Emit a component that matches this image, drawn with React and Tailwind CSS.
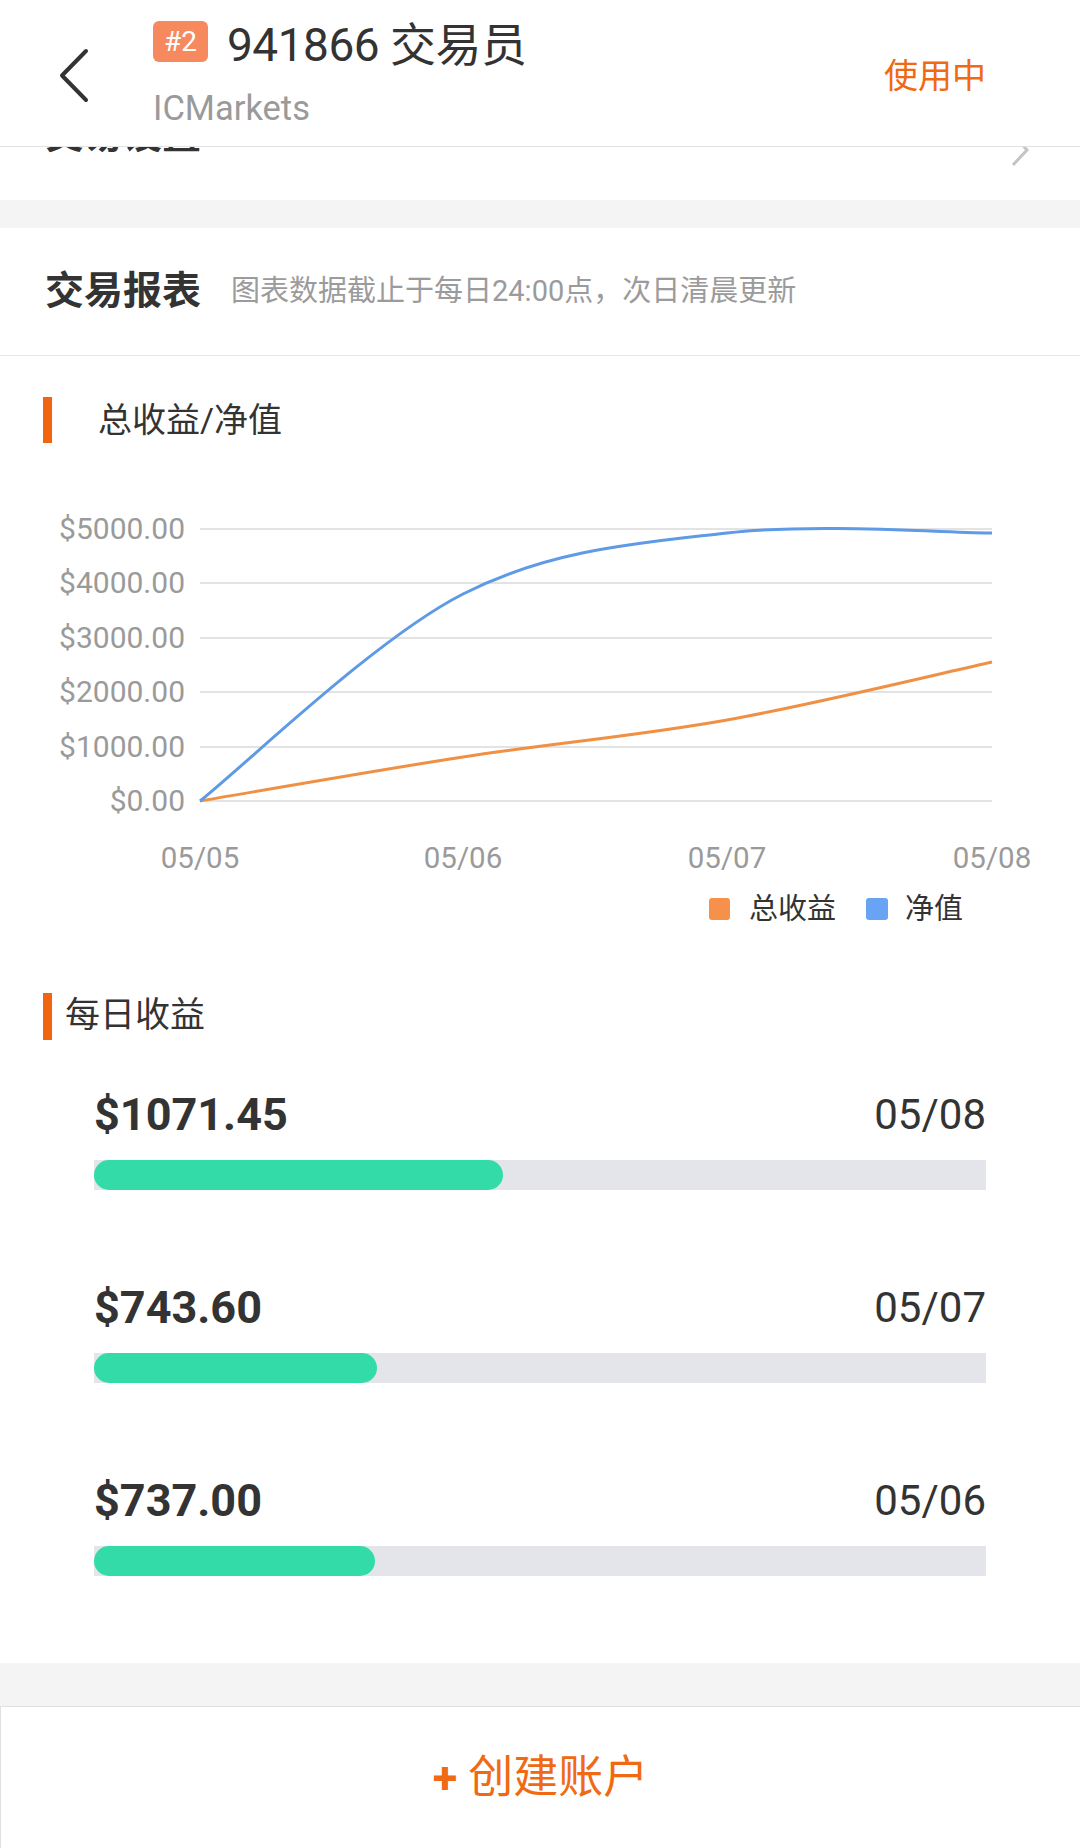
import React from "react";

function smoothPath(pts) {
  let d = `M${pts[0][0]},${pts[0][1]}`;
  for (let i = 0; i < pts.length - 1; i++) {
    const p0 = pts[i - 1] || pts[i];
    const p1 = pts[i];
    const p2 = pts[i + 1];
    const p3 = pts[i + 2] || p2;
    const c1x = p1[0] + (p2[0] - p0[0]) / 6;
    const c1y = p1[1] + (p2[1] - p0[1]) / 6;
    const c2x = p2[0] - (p3[0] - p1[0]) / 6;
    const c2y = p2[1] - (p3[1] - p1[1]) / 6;
    d += ` C${c1x.toFixed(1)},${c1y.toFixed(1)} ${c2x.toFixed(1)},${c2y.toFixed(1)} ${p2[0]},${p2[1]}`;
  }
  return d;
}

const bluePts = [
  [200, 358], [463, 151], [727, 90], [992, 90],
];
const orangePts = [
  [200, 358], [463, 314], [727, 277], [992, 219],
];

const grid = [86, 140, 195, 249, 304, 358];
const yLabels = ["$5000.00", "$4000.00", "$3000.00", "$2000.00", "$1000.00", "$0.00"];
const xLabels = [
  [200, "05/05"],
  [463, "05/06"],
  [727, "05/07"],
  [992, "05/08"],
];

const rows = [
  { amount: "$1071.45", date: "05/08", pct: 45.85 },
  { amount: "$743.60", date: "05/07", pct: 31.7 },
  { amount: "$737.00", date: "05/06", pct: 31.5 },
];

export default function App() {
  return (
    <div className="w-[1080px] h-[1848px] overflow-hidden bg-white font-[Roboto,'Noto_Sans_CJK_SC',sans-serif] text-[#333]">
      {/* Header */}
      <div className="relative z-10 h-[147px] bg-white border-b border-[#e2e2e2] flex">
        <svg className="ml-[57px] mt-[48px]" width="34" height="56" viewBox="0 0 34 56">
          <polyline points="29,3 5,27.5 29,52" fill="none" stroke="#333" strokeWidth="4" strokeLinecap="round" strokeLinejoin="round" />
        </svg>
        <div className="ml-[62px] pt-[21px] flex flex-col">
          <div className="flex items-center h-[41px]">
            <span className="h-[41px] px-[11px] rounded-[6px] bg-[#f7895f] text-white text-[28px] leading-[41px]">#2</span>
            <span className="ml-[19px] mt-[8px] text-[46px] leading-[41px] text-[#333] tracking-[-0.5px]">941866 交易员</span>
          </div>
          <div className="mt-[26px] text-[34.5px] leading-[40px] text-[#9a9a9a]">ICMarkets</div>
        </div>
        <div className="ml-auto mr-[94px] self-center mt-[6px] text-[34px] text-[#ef6a12]">使用中</div>
      </div>

      {/* Clipped row behind header */}
      <div className="h-[53px] overflow-hidden">
        <div className="mt-[-36px] h-[48px] flex items-center pl-[45px] pr-[50px]">
          <span className="text-[39px] leading-[48px] font-bold text-[#333]">交易设置</span>
          <svg className="ml-auto mt-[30px]" width="20" height="36" viewBox="0 0 20 36">
            <polyline points="3,3 17,18 3,33" fill="none" stroke="#c4c4c4" strokeWidth="3" />
          </svg>
        </div>
      </div>

      <div className="h-[28px] bg-[#f4f4f4]" />

      {/* 交易报表 */}
      <div className="h-[128px] border-b border-[#e8e8e8] flex items-center pl-[45px]">
        <span className="text-[39px] font-bold text-[#333]">交易报表</span>
        <span className="ml-[30px] text-[29px] text-[#9b9b9b]">图表数据截止于每日24:00点，次日清晨更新</span>
      </div>

      {/* 总收益/净值 */}
      <div className="mt-[41px] h-[46px] flex items-center">
        <div className="ml-[43px] w-[9px] h-[46px] bg-[#f06412]" />
        <span className="ml-[46px] text-[34px] text-[#333]">总收益/净值</span>
      </div>

      <svg width="1080" height="490" viewBox="0 0 1080 490" className="block">
        {grid.map((y) => (
          <line key={y} x1="200" x2="992" y1={y} y2={y} stroke="#e3e3e3" strokeWidth="2" />
        ))}
        {grid.map((y, i) => (
          <text key={i} x="185" y={y + 10} textAnchor="end" fontSize="30" fill="#9a9a9a" fontFamily="Roboto, sans-serif">
            {yLabels[i]}
          </text>
        ))}
        {xLabels.map(([x, t]) => (
          <text key={t} x={x} y="425" textAnchor="middle" fontSize="29.5" fill="#9a9a9a" fontFamily="Roboto, sans-serif">
            {t}
          </text>
        ))}
        <path d={smoothPath(orangePts)} fill="none" stroke="#ef9044" strokeWidth="3" />
        <path d={smoothPath(bluePts)} fill="none" stroke="#5f9ae6" strokeWidth="3" />
        <rect x="709" y="455" width="21" height="22" rx="3" fill="#f5914a" />
        <text x="749" y="476" fontSize="29" fill="#333" fontFamily="'Noto Sans CJK SC', sans-serif">总收益</text>
        <rect x="866" y="455" width="22" height="22" rx="3" fill="#68a4f3" />
        <text x="905" y="476" fontSize="29" fill="#333" fontFamily="'Noto Sans CJK SC', sans-serif">净值</text>
      </svg>

      {/* 每日收益 */}
      <div className="mt-[60px] h-[47px] flex items-center">
        <div className="ml-[43px] w-[9px] h-[47px] bg-[#f06412]" />
        <span className="ml-[13px] text-[35px] text-[#333]">每日收益</span>
      </div>

      <div className="px-[94px] pb-[87px]">
        {rows.map((r, i) => (
          <div key={r.date} className={i === 0 ? "mt-[49px]" : "mt-[92px]"}>
            <div className="flex items-center justify-between h-[52px]">
              <span className="text-[45px] leading-[52px] font-bold text-[#333]">{r.amount}</span>
              <span className="text-[42px] leading-[52px] text-[#333]">{r.date}</span>
            </div>
            <div className="mt-[19px] h-[30px] bg-[#e4e5ea]">
              <div className="h-[30px] rounded-full bg-[#33dba9]" style={{ width: `${r.pct}%` }} />
            </div>
          </div>
        ))}
      </div>

      <div className="h-[43px] bg-[#f4f4f4]" />

      <div className="h-[142px] border-t border-l border-[#e0e0e0] flex items-center justify-center">
        <span className="text-[45px] text-[#ef6a12]">
          <span className="font-bold">+</span> 创建账户
        </span>
      </div>
    </div>
  );
}
